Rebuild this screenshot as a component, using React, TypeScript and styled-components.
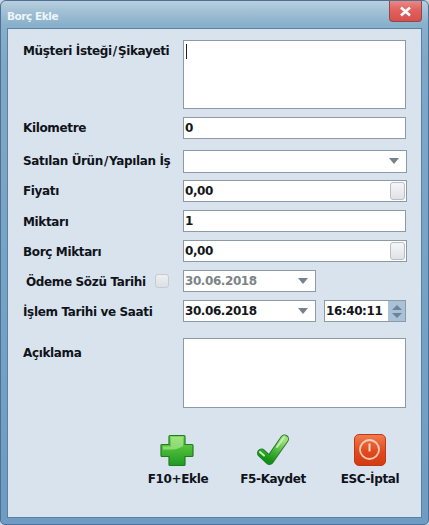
import React from "react";
import styled, { createGlobalStyle } from "styled-components";

const Global = createGlobalStyle`
  html, body { margin: 0; padding: 0; background: #c9d6e2; }
  #root { width: 429px; height: 525px; }
  * { box-sizing: border-box; }
`;

const Frame = styled.div`
  width: 429px;
  height: 525px;
  display: flex;
  flex-direction: column;
  border: 1px solid #4f6f97;
  border-radius: 6px 6px 5px 5px;
  background: linear-gradient(180deg, #b9d0de 0, #a6c3d6 8px, #88b0cb 24px, #7ea8c6 60px, #6e9cc2 100%);
  padding: 0 6px 6px 6px;
`;

const TitleBar = styled.div`
  height: 27px;
  flex: none;
  display: flex;
  align-items: flex-start;
  justify-content: space-between;
`;

const Title = styled.span`
  font: bold 10.5px "DejaVu Sans", sans-serif;
  color: #eef5fa;
  margin-top: 9px;
  letter-spacing: -0.45px;
`;

const CloseButton = styled.div`
  width: 33px;
  height: 21px;
  display: flex;
  align-items: center;
  justify-content: center;
  border: 1px solid #8a4a4e;
  border-top: none;
  border-radius: 0 0 4px 4px;
  background: linear-gradient(180deg, #e98a85 0, #e2605d 45%, #d8504e 100%);
`;

const Panel = styled.div`
  flex: 1;
  display: flex;
  flex-direction: column;
  background: #d9e3ed;
  border: 1px solid #5a80a6;
  padding: 11px 14px 0 15px;
`;

const Row = styled.div<{ $h: number; $mt: number }>`
  display: grid;
  grid-template-columns: 160px 1fr;
  height: ${(p) => p.$h}px;
  margin-top: ${(p) => p.$mt}px;
`;

const Label = styled.label<{ $indent?: number; $top?: number }>`
  font: bold 12px "DejaVu Sans", sans-serif;
  letter-spacing: -0.36px;
  color: #10131a;
  padding-left: ${(p) => p.$indent ?? 0}px;
  padding-top: ${(p) => p.$top ?? 4}px;
  white-space: nowrap;
`;

const Slash = styled.span`
  margin: 0 1px 0 1px;
`;

const FieldBox = styled.div<{ $w?: number; $disabled?: boolean }>`
  position: relative;
  width: ${(p) => (p.$w ? `${p.$w}px` : "auto")};
  height: 100%;
  display: flex;
  align-items: center;
  flex: ${(p) => (p.$w ? "none" : "1")};
  background: #fff;
  border: 1px solid #8d9aa6;
  padding-left: 1px;
  font: bold 12px "DejaVu Sans", sans-serif;
  letter-spacing: -0.42px;
  color: ${(p) => (p.$disabled ? "#7e8388" : "#14161a")};
`;

const Area = styled(FieldBox)`
  align-items: flex-start;
  padding: 3px 0 0 2px;
`;

const Caret = styled.span`
  width: 1px;
  height: 15px;
  background: #222;
`;

const Control = styled.div<{ $right?: number }>`
  display: flex;
  height: 100%;
  margin-right: ${(p) => p.$right ?? 1}px;
  gap: 8px;
`;

const Arrow = styled.span`
  position: absolute;
  right: 7px;
  top: 7px;
  width: 0;
  height: 0;
  border-left: 5px solid transparent;
  border-right: 5px solid transparent;
  border-top: 6px solid #75818d;
`;

const SpinPad = styled.span`
  position: absolute;
  right: 1px;
  top: 1px;
  bottom: 1px;
  width: 15px;
  border: 1px solid #b9bfc6;
  border-radius: 3px;
  background: linear-gradient(180deg, #f5f6f7, #dfe2e6);
`;

const TimeSpin = styled.span`
  position: absolute;
  right: 0;
  top: 0;
  bottom: 0;
  width: 17px;
  background: #a9c2d8;
  display: flex;
  flex-direction: column;
  align-items: center;
  justify-content: center;
  gap: 3px;
`;

const SpinUp = styled.i`
  width: 0;
  height: 0;
  border-left: 5px solid transparent;
  border-right: 5px solid transparent;
  border-bottom: 5px solid #6f8396;
`;

const SpinDown = styled.i`
  width: 0;
  height: 0;
  border-left: 5px solid transparent;
  border-right: 5px solid transparent;
  border-top: 5px solid #6f8396;
`;

const CheckLabel = styled.div`
  display: flex;
  justify-content: space-between;
  align-items: flex-start;
  padding-right: 14px;
`;

const CheckBox = styled.span`
  width: 14px;
  height: 14px;
  margin-top: 4px;
  border: 1px solid #c4cbd2;
  border-radius: 3px;
  background: linear-gradient(180deg, #eef0f2, #dcdfe3);
`;

const Actions = styled.div`
  display: flex;
  margin-top: 24px;
  margin-right: -14px;
  padding-left: 110px;
`;

const Action = styled.div<{ $w: number }>`
  width: ${(p) => p.$w}px;
  flex: none;
  display: flex;
  flex-direction: column;
  align-items: center;
  gap: 4px;
  font: bold 12px "DejaVu Sans", sans-serif;
  letter-spacing: -0.36px;
  color: #10131a;
`;

const Icon = styled.svg`
  width: 36px;
  height: 36px;
  display: block;
`;

const PlusIcon = () => (
  <Icon viewBox="0 0 36 36">
    <defs>
      <linearGradient id="pl" x1="0" y1="0" x2="0" y2="1">
        <stop offset="0" stopColor="#7ed65a" />
        <stop offset="0.45" stopColor="#4dbb38" />
        <stop offset="1" stopColor="#1f9a22" />
      </linearGradient>
    </defs>
    <path d="M10 3.500h14a1 1 0 0 1 1 1v8h7a1 1 0 0 1 1 1v10a1 1 0 0 1-1 1h-7v8a1 1 0 0 1-1 1H10a1 1 0 0 1-1-1v-8H2a1 1 0 0 1-1-1v-10a1 1 0 0 1 1-1h7v-8a1 1 0 0 1 1-1z" fill="url(#pl)" stroke="#1f7d1f" strokeWidth="1.200" />
    <path d="M11 5h12v9c-3 2-6 3-9 3.500H3v-3h8z" fill="#bdf0a4" opacity="0.55" />
  </Icon>
);

const CheckIcon = () => (
  <Icon viewBox="0 0 36 36">
    <defs>
      <linearGradient id="ck" x1="0.800" y1="0" x2="0.300" y2="1">
        <stop offset="0" stopColor="#9fe07c" />
        <stop offset="0.55" stopColor="#45b338" />
        <stop offset="1" stopColor="#129016" />
      </linearGradient>
    </defs>
    <path d="M6.500 21 L14.500 28.500 L29.500 7" fill="none" stroke="#27792a" strokeWidth="9" strokeLinecap="round" strokeLinejoin="round" />
    <path d="M6.500 21 L14.500 28.500 L29.500 7" fill="none" stroke="url(#ck)" strokeWidth="7" strokeLinecap="round" strokeLinejoin="round" />
    <path d="M5 20 L9 23.500 M22 15 L29 5.500" fill="none" stroke="#c4efaf" strokeWidth="2" strokeLinecap="round" />
  </Icon>
);

const PowerIcon = () => (
  <Icon viewBox="0 0 36 36">
    <defs>
      <linearGradient id="pw" x1="0" y1="0" x2="0" y2="1">
        <stop offset="0" stopColor="#ef7d50" />
        <stop offset="0.55" stopColor="#e2491f" />
        <stop offset="1" stopColor="#d23a12" />
      </linearGradient>
    </defs>
    <rect x="2.500" y="2.500" width="31" height="31" rx="4.500" fill="url(#pw)" stroke="#bf3a14" />
    <circle cx="17.500" cy="17.500" r="9.500" fill="none" stroke="#f6cdb6" strokeWidth="1.800" />
    <rect x="16.500" y="11.500" width="2" height="8" fill="#f9d8c4" />
  </Icon>
);

export default function App() {
  return (
    <>
      <Global />
      <Frame>
        <TitleBar>
          <Title>Borç Ekle</Title>
          <CloseButton>
            <svg width="13" height="11" viewBox="0 0 13 11">
              <path d="M2 1.500l9 8M11 1.500l-9 8" stroke="#fff" strokeWidth="2.600" fill="none" />
            </svg>
          </CloseButton>
        </TitleBar>
        <Panel>
          <Row $h={69} $mt={0}>
            <Label>Müşteri İsteği<Slash>/</Slash>Şikayeti</Label>
            <Control>
              <Area><Caret /></Area>
            </Control>
          </Row>
          <Row $h={22} $mt={8}>
            <Label>Kilometre</Label>
            <Control><FieldBox>0</FieldBox></Control>
          </Row>
          <Row $h={23} $mt={11}>
            <Label>Satılan Ürün<Slash>/</Slash>Yapılan İş</Label>
            <Control $right={0}><FieldBox><Arrow /></FieldBox></Control>
          </Row>
          <Row $h={22} $mt={7}>
            <Label>Fiyatı</Label>
            <Control $right={0}><FieldBox>0,00<SpinPad /></FieldBox></Control>
          </Row>
          <Row $h={22} $mt={8}>
            <Label $top={5}>Miktarı</Label>
            <Control><FieldBox>1</FieldBox></Control>
          </Row>
          <Row $h={22} $mt={8}>
            <Label $top={5}>Borç Miktarı</Label>
            <Control $right={0}><FieldBox>0,00<SpinPad /></FieldBox></Control>
          </Row>
          <Row $h={22} $mt={8}>
            <CheckLabel>
              <Label $indent={3} $top={5}>Ödeme Sözü Tarihi</Label>
              <CheckBox />
            </CheckLabel>
            <Control>
              <FieldBox $w={133} $disabled>30.06.2018<Arrow /></FieldBox>
            </Control>
          </Row>
          <Row $h={22} $mt={8}>
            <Label $top={5}>İşlem Tarihi ve Saati</Label>
            <Control>
              <FieldBox $w={133}>30.06.2018<Arrow /></FieldBox>
              <FieldBox $w={82}>
                16:40:11
                <TimeSpin><SpinUp /><SpinDown /></TimeSpin>
              </FieldBox>
            </Control>
          </Row>
          <Row $h={70} $mt={16}>
            <Label $top={8}>Açıklama</Label>
            <Control><Area /></Control>
          </Row>
          <Actions>
            <Action $w={90}><PlusIcon />F10+Ekle</Action>
            <Action $w={100}><CheckIcon />F5-Kaydet</Action>
            <Action $w={94}><PowerIcon />ESC-İptal</Action>
          </Actions>
        </Panel>
      </Frame>
    </>
  );
}
